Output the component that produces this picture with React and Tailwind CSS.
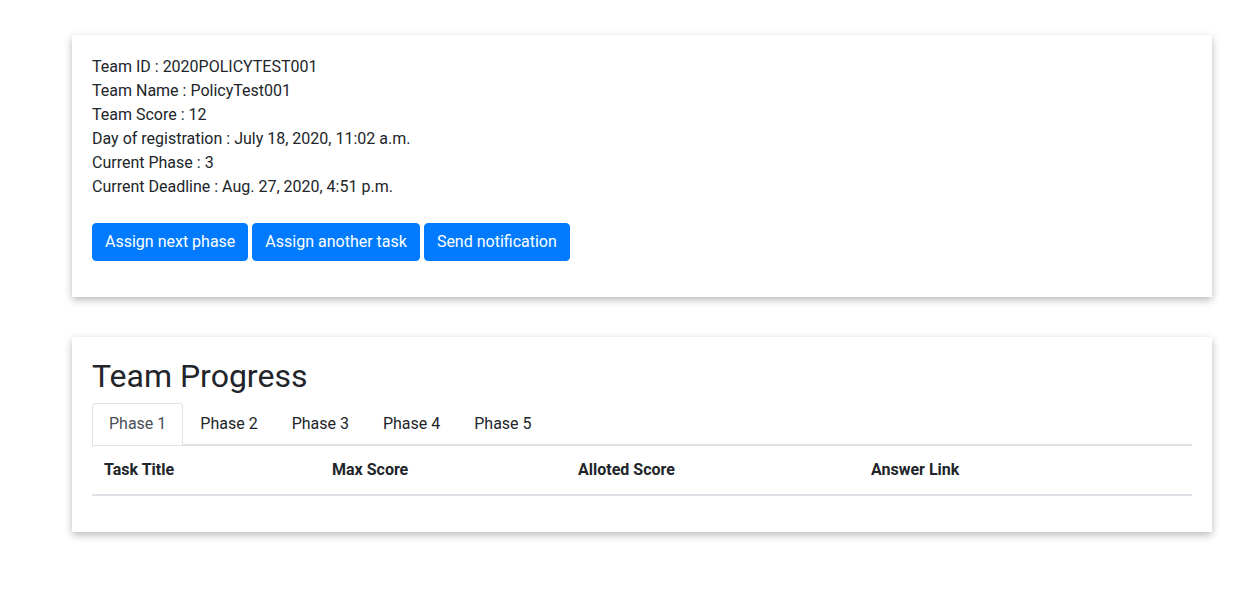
import React from "react";

const info = [
  ["Team ID", "2020POLICYTEST001"],
  ["Team Name", "PolicyTest001"],
  ["Team Score", "12"],
  ["Day of registration", "July 18, 2020, 11:02 a.m."],
  ["Current Phase", "3"],
  ["Current Deadline", "Aug. 27, 2020, 4:51 p.m."],
];

const phases = ["Phase 1", "Phase 2", "Phase 3", "Phase 4", "Phase 5"];

export default function App() {
  return (
    <div
      className="min-h-screen bg-white text-[#212529] text-base leading-6"
      style={{ fontFamily: "Roboto, 'Liberation Sans', sans-serif" }}
    >
      <div className="pt-[35px] pl-[72px] w-[1212px]">
        {/* Team info card */}
        <div className="bg-white p-5 shadow-[0_3px_8px_rgba(0,0,0,0.28)]">
          <div className="mb-6">
            {info.map(([k, v]) => (
              <div key={k}>
                {k} : {v}
              </div>
            ))}
          </div>
          <div className="flex gap-1 mb-4">
            <button className="bg-[#007bff] border border-[#007bff] text-white px-3 py-1.5 rounded leading-6">
              Assign next phase
            </button>
            <button className="bg-[#007bff] border border-[#007bff] text-white px-3 py-1.5 rounded leading-6">
              Assign another task
            </button>
            <button className="bg-[#007bff] border border-[#007bff] text-white px-3 py-1.5 rounded leading-6">
              Send notification
            </button>
          </div>
        </div>

        {/* Team progress card */}
        <div className="mt-10 bg-white p-5 shadow-[0_3px_8px_rgba(0,0,0,0.28)]">
          <h2 className="text-[32px] leading-[38px] font-normal mb-2">Team Progress</h2>
          <div className="flex border-b border-[#dee2e6]">
            {phases.map((p, i) => (
              <div
                key={p}
                className={
                  i === 0
                    ? "px-4 py-2 border border-[#dee2e6] border-b-white rounded-t -mb-px text-[#495057] bg-white"
                    : "px-4 py-2 border border-transparent -mb-px"
                }
              >
                {p}
              </div>
            ))}
          </div>
          <div className="flex font-bold border-t border-[#dee2e6] border-b-2 mb-4">
            <div className="w-[228px] p-3">Task Title</div>
            <div className="w-[246px] p-3">Max Score</div>
            <div className="w-[293px] p-3">Alloted Score</div>
            <div className="flex-1 p-3">Answer Link</div>
          </div>
        </div>
      </div>
    </div>
  );
}
